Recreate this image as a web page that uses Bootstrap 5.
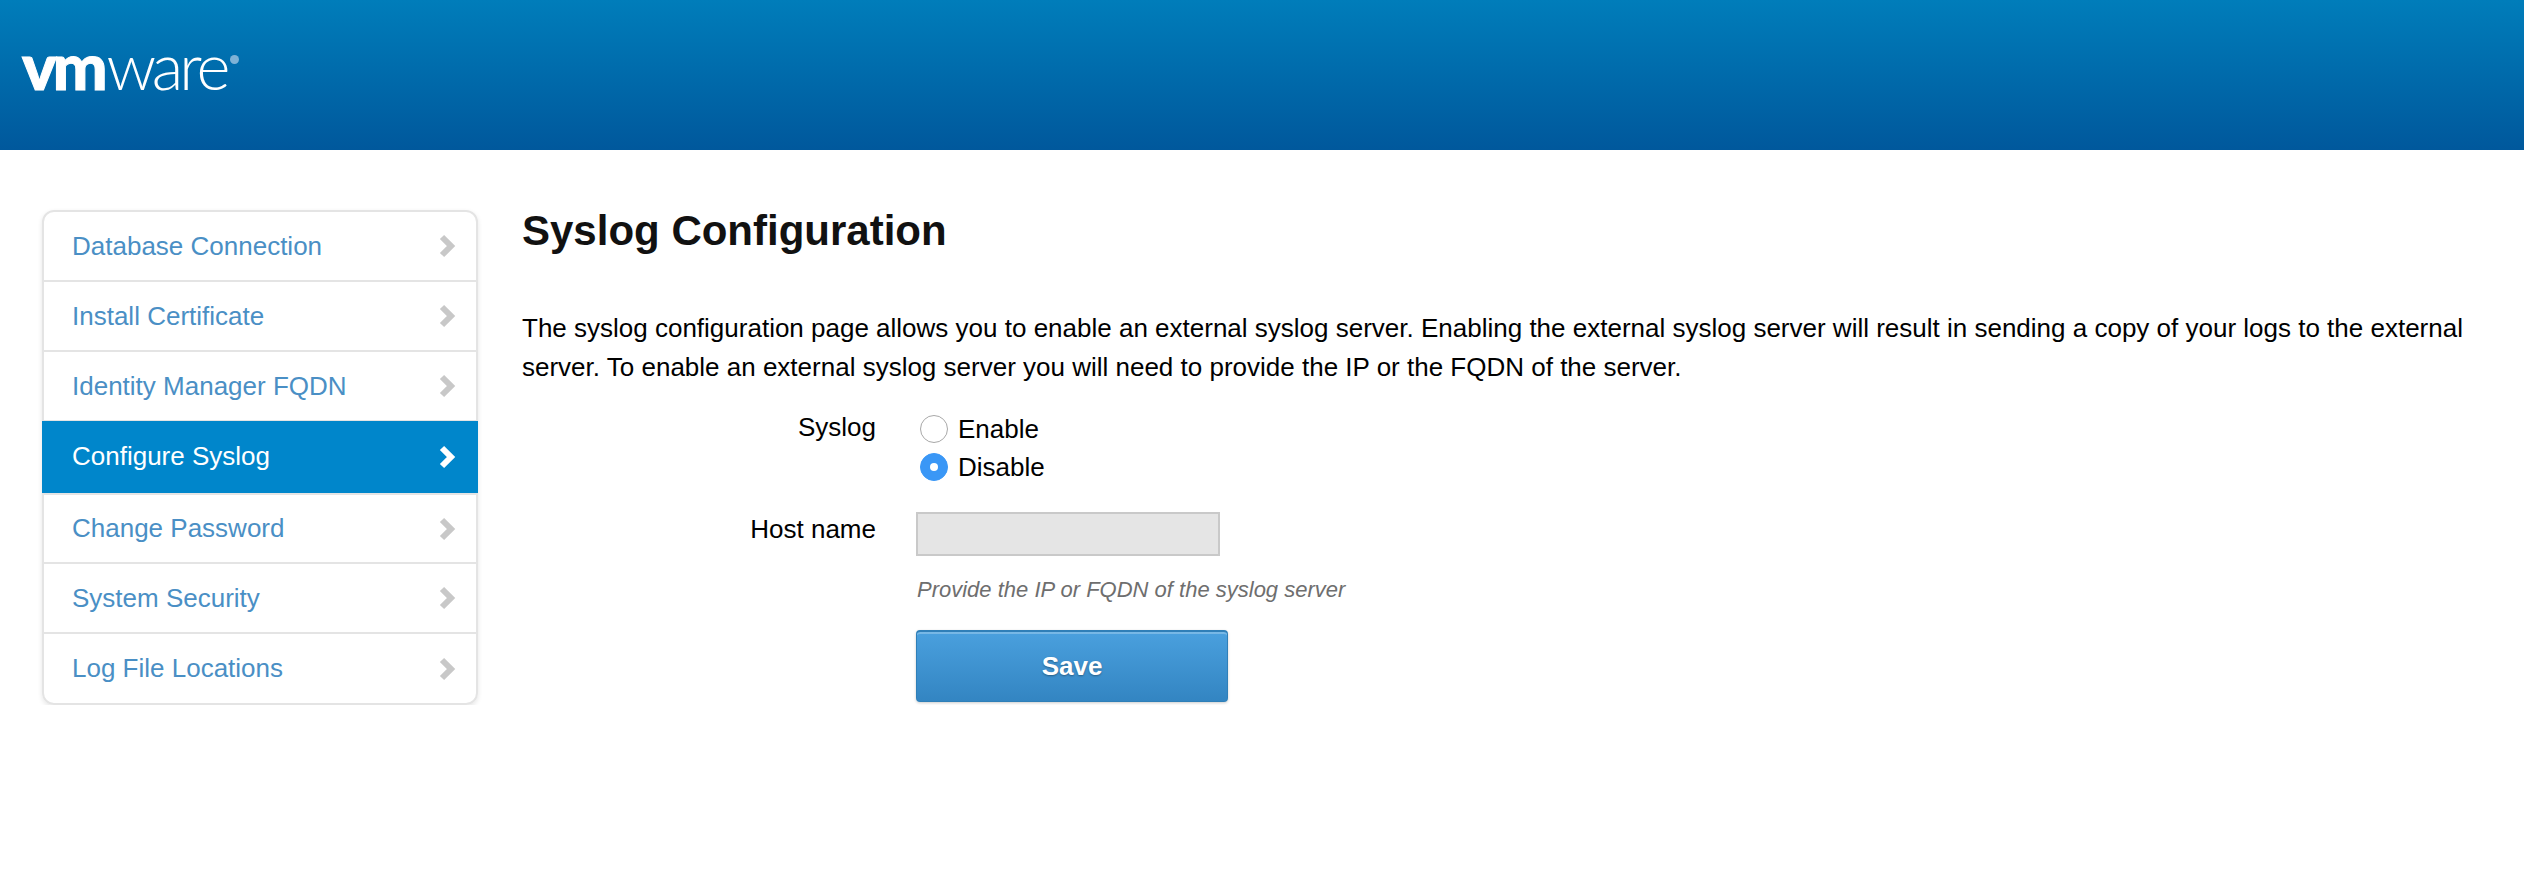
<!DOCTYPE html>
<html lang="en">
<head>
<meta charset="utf-8">
<title>Syslog Configuration</title>
<link href="https://cdn.jsdelivr.net/npm/bootstrap@5.3.0/dist/css/bootstrap.min.css" rel="stylesheet">
<style>
body{font-family:"Liberation Sans",Arial,sans-serif;font-size:26px;color:#000;background:#fff;}
.top-band{height:150px;background:linear-gradient(#007dba,#00589c);padding:33px 0 0 22px;}
.brand-mark{display:inline-flex;align-items:flex-start;color:#fff;line-height:1;font-family:"Lato",sans-serif;font-size:65px;}
.brand-vm{font-weight:900;letter-spacing:-4px;margin-right:3px;-webkit-text-stroke:1px #fff;}
.brand-ware{font-weight:300;letter-spacing:-4px;}
.brand-reg{width:9px;height:9px;border-radius:50%;background:#7fb2d6;margin:22px 0 0 4px;}
.page-body{padding:60px 0 0 42px;gap:44px;}
.side-nav{width:436px;flex:none;border:2px solid #e4e4e4;border-radius:12px;box-shadow:0 2px 5px rgba(0,0,0,.1);height:495px;}
.side-nav .list-group-item{height:70.4px;padding:0 0 0 28px;border:0;border-bottom:2px solid #e4e4e4;color:#4a8fc5;font-size:26px;line-height:37px;background:transparent;}
.side-nav .list-group-item:last-child{border-bottom:0;height:69px;}
.side-nav .list-group-item svg{margin-right:20px;width:18px;height:24px;color:#c8c8c8;}
.side-nav .list-group-item.current{background:#0086cb;color:#fff;margin:-1.4px -2px 0;width:436px;height:72.4px;padding-left:30px;border-bottom:0;border-radius:0;}
.side-nav .list-group-item.current + .list-group-item{border-top:2px solid #e4e4e4;height:71.8px;}
.side-nav .list-group-item.current svg{color:#fff;margin-right:22px;}
.main-col{width:2000px;flex:none;}
.page-title{font-size:42px;font-weight:700;color:#111;margin:-3px 0 0;line-height:47px;}
.intro{font-size:26px;line-height:38.5px;color:#000;margin:55px 0 0;}
.form-line{display:flex;}
.lbl-col{width:354px;text-align:right;flex:none;margin-right:39px;line-height:34px;}
.radio-line{display:flex;align-items:center;height:38px;margin-left:5px;gap:10px;}
.radio-dot{width:28px;height:28px;margin:0;background-color:#fff;border:1px solid #a8a8a8;}
.radio-dot:checked{background-color:#3a97f6;border-color:#3a97f6;background-size:60%;}
.host-box{width:304px;height:44px;margin-left:1px;background:#e5e5e5;border:2px solid #c9c9c9;border-radius:0;padding:0;}
.host-box:disabled{background:#e5e5e5;}
.hint{font-style:italic;font-size:22px;color:#6e6e6e;margin:21px 0 0 2px;line-height:26px;}
.save-btn{width:312px;height:72px;margin:27px 0 0 1px;font-size:26px;font-weight:700;color:#fff;background:linear-gradient(#4aa0de,#3385c2);border:1px solid #2f7fb8;border-top:2px solid #2f7fb8;border-radius:4px;box-shadow:inset 0 2px 0 rgba(255,255,255,.25),0 1px 3px rgba(0,0,0,.2);text-shadow:0 1px 2px rgba(0,0,0,.35);padding:0;}
.save-btn:hover{color:#fff;}
.host-line{margin-top:26px;}
.syslog-form{margin-top:24px;}
</style>
</head>
<body>
<header class="top-band">
  <div class="brand-mark"><span class="brand-vm">vm</span><span class="brand-ware">ware</span><span class="brand-reg"></span></div>
</header>
<div class="page-body d-flex">
  <nav class="side-nav list-group flex-column">
    <a href="#" class="list-group-item d-flex align-items-center justify-content-between text-decoration-none">Database Connection<svg viewBox="0 0 18 24"><path d="M4 3l9 9-9 9" fill="none" stroke="currentColor" stroke-width="6"/></svg></a>
    <a href="#" class="list-group-item d-flex align-items-center justify-content-between text-decoration-none">Install Certificate<svg viewBox="0 0 18 24"><path d="M4 3l9 9-9 9" fill="none" stroke="currentColor" stroke-width="6"/></svg></a>
    <a href="#" class="list-group-item d-flex align-items-center justify-content-between text-decoration-none">Identity Manager FQDN<svg viewBox="0 0 18 24"><path d="M4 3l9 9-9 9" fill="none" stroke="currentColor" stroke-width="6"/></svg></a>
    <a href="#" class="list-group-item current d-flex align-items-center justify-content-between text-decoration-none">Configure Syslog<svg viewBox="0 0 18 24"><path d="M4 3l9 9-9 9" fill="none" stroke="currentColor" stroke-width="6"/></svg></a>
    <a href="#" class="list-group-item d-flex align-items-center justify-content-between text-decoration-none">Change Password<svg viewBox="0 0 18 24"><path d="M4 3l9 9-9 9" fill="none" stroke="currentColor" stroke-width="6"/></svg></a>
    <a href="#" class="list-group-item d-flex align-items-center justify-content-between text-decoration-none">System Security<svg viewBox="0 0 18 24"><path d="M4 3l9 9-9 9" fill="none" stroke="currentColor" stroke-width="6"/></svg></a>
    <a href="#" class="list-group-item d-flex align-items-center justify-content-between text-decoration-none">Log File Locations<svg viewBox="0 0 18 24"><path d="M4 3l9 9-9 9" fill="none" stroke="currentColor" stroke-width="6"/></svg></a>
  </nav>
  <main class="main-col">
    <h1 class="page-title">Syslog Configuration</h1>
    <p class="intro">The syslog configuration page allows you to enable an external syslog server. Enabling the external syslog server will result in sending a copy of your logs to the external server. To enable an external syslog server you will need to provide the IP or the FQDN of the server.</p>
    <form class="syslog-form">
      <div class="form-line">
        <div class="lbl-col">Syslog</div>
        <div>
          <label class="radio-line"><input class="form-check-input radio-dot" type="radio" name="syslog"> Enable</label>
          <label class="radio-line"><input class="form-check-input radio-dot" type="radio" name="syslog" checked> Disable</label>
        </div>
      </div>
      <div class="form-line host-line">
        <div class="lbl-col">Host name</div>
        <div>
          <input class="form-control host-box" type="text" disabled>
          <p class="hint">Provide the IP or FQDN of the syslog server</p>
          <button type="button" class="btn save-btn">Save</button>
        </div>
      </div>
    </form>
  </main>
</div>
</body>
</html>
